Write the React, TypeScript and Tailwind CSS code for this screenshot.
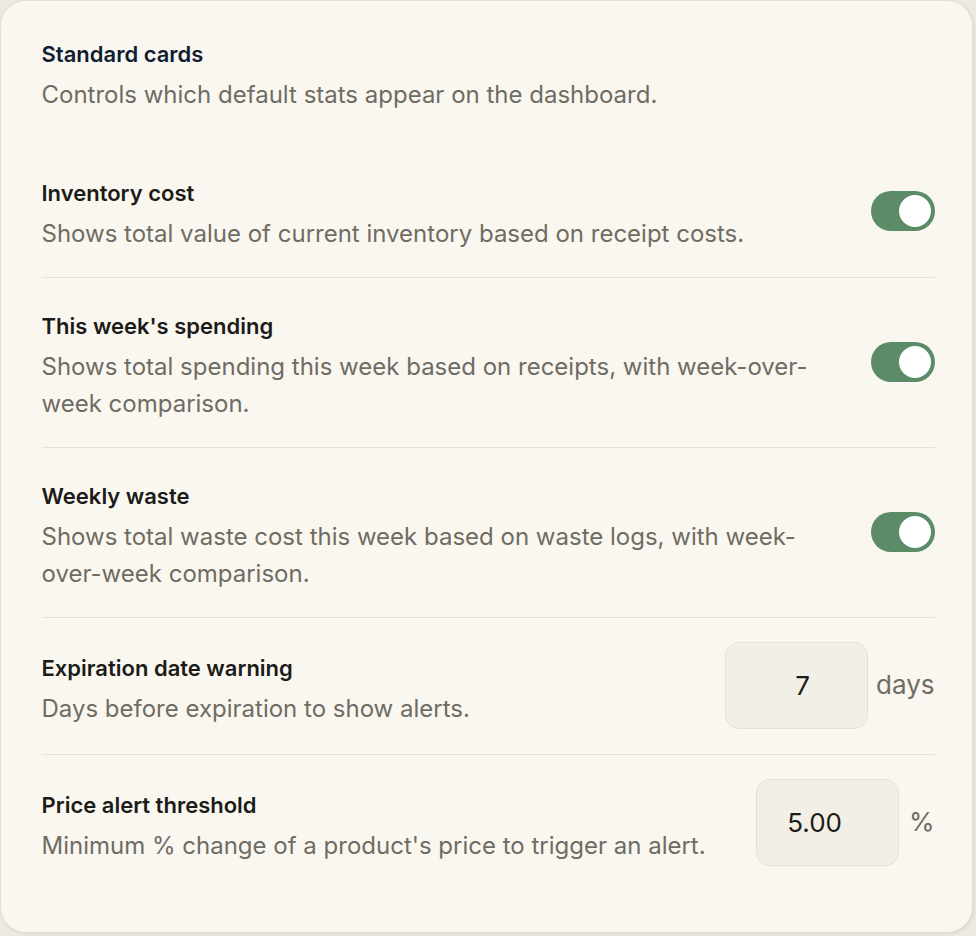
import React from "react";

const font = { fontFamily: "Inter, 'Noto Sans', sans-serif" };

function Toggle() {
  return (
    <div className="w-[64px] h-[40px] rounded-full bg-[#5c8b68] flex items-center justify-end pr-[4px] shrink-0">
      <div className="w-[32px] h-[32px] rounded-full bg-white" />
    </div>
  );
}

function Text({ title, desc }: { title: string; desc: React.ReactNode }) {
  return (
    <div className="pt-[10px] flex-1">
      <div className="text-[22px] leading-[28px] font-semibold text-[#1c1b18]">{title}</div>
      <div className="mt-[8px] text-[24px] leading-[37px] text-[#6f6c63]">{desc}</div>
    </div>
  );
}

export default function App() {
  return (
    <div style={font} className="w-[976px] h-[936px] bg-[#ece9e1] pr-[3px] pb-[3px]">
      <div className="w-full h-full rounded-[26px] border-[1.5px] border-[#e4e0d6] bg-[#faf7f0] shadow-[1px_1px_3px_rgba(0,0,0,0.08)] pl-[40.5px] pr-[37.5px] pt-[39px]">
        <div className="text-[22px] leading-[28px] font-semibold text-[#0f1d30]">Standard cards</div>
        <div className="mt-[8px] text-[24px] leading-[37px] text-[#6f6c63]">
          Controls which default stats appear on the dashboard.
        </div>

        <div className="mt-[32px]">
          <div className="flex items-center gap-6 pt-6 pb-[25px] border-b border-[#e6e2d8]">
            <Text title="Inventory cost" desc="Shows total value of current inventory based on receipt costs." />
            <Toggle />
          </div>
          <div className="flex items-center gap-6 pt-6 pb-[25px] border-b border-[#e6e2d8]">
            <Text
              title="This week's spending"
              desc={<>Shows total spending this week based on receipts, with week-over-<br />week comparison.</>}
            />
            <Toggle />
          </div>
          <div className="flex items-center gap-6 pt-6 pb-[25px] border-b border-[#e6e2d8]">
            <Text
              title="Weekly waste"
              desc={<>Shows total waste cost this week based on waste logs, with week-<br />over-week comparison.</>}
            />
            <Toggle />
          </div>
          <div className="flex items-center gap-[8px] pt-6 pb-[25px] border-b border-[#e6e2d8]">
            <Text title="Expiration date warning" desc="Days before expiration to show alerts." />
            <div className="w-[143px] h-[87px] rounded-[14px] bg-[#f2efe6] border-[1.5px] border-[#e5e1d6] flex items-center justify-end pr-[57px] text-[26px] text-[#1c1b18]">
              7
            </div>
            <div className="text-[26px] text-[#6f6c63] leading-[30px] mb-[2px]">days</div>
          </div>
          <div className="flex items-center gap-[10px] pt-6">
            <Text title="Price alert threshold" desc="Minimum % change of a product's price to trigger an alert." />
            <div className="w-[143px] h-[87px] rounded-[14px] bg-[#f2efe6] border-[1.5px] border-[#e5e1d6] flex items-center justify-end pr-[56px] text-[26px] text-[#1c1b18]">
              5.00
            </div>
            <div className="text-[26px] text-[#6f6c63] leading-[30px] mb-[2px]">%</div>
          </div>
        </div>
      </div>
    </div>
  );
}
